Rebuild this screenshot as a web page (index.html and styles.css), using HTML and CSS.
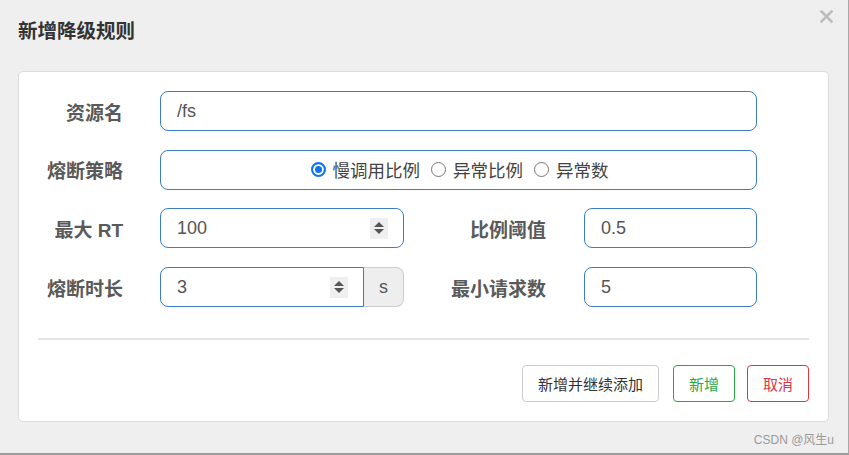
FILE: index.html
```html
<!DOCTYPE html>
<html lang="zh">
<head>
<meta charset="utf-8">
<title>新增降级规则</title>
<link rel="stylesheet" href="styles.css">
</head>
<body>
<div class="modal">
  <header class="modal-head">
    <h4 class="title">新增降级规则</h4>
    <span class="close" aria-label="关闭">
      <svg width="13" height="13" viewBox="0 0 13 13"><path d="M1.5 1.5 L11.5 11.5 M11.5 1.5 L1.5 11.5" stroke="#bdbdbd" stroke-width="2.6" stroke-linecap="square" fill="none"/></svg>
    </span>
  </header>
  <section class="panel">
    <div class="form">
      <div class="row">
        <label class="label">资源名</label>
        <div class="field wide">/fs</div>
      </div>
      <div class="row">
        <label class="label">熔断策略</label>
        <div class="field wide radios">
          <span class="radio"><span class="dot checked"></span>慢调用比例</span>
          <span class="radio"><span class="dot"></span>异常比例</span>
          <span class="radio"><span class="dot"></span>异常数</span>
        </div>
      </div>
      <div class="row">
        <label class="label">最大 RT</label>
        <div class="field num">100<span class="spin"><i class="up"></i><i class="down"></i></span></div>
        <label class="label label2">比例阈值</label>
        <div class="field small">0.5</div>
      </div>
      <div class="row">
        <label class="label">熔断时长</label>
        <div class="group">
          <div class="field num joined">3<span class="spin"><i class="up"></i><i class="down"></i></span></div>
          <span class="addon">s</span>
        </div>
        <label class="label label2">最小请求数</label>
        <div class="field small">5</div>
      </div>
    </div>
    <div class="divider"></div>
    <div class="actions">
      <button class="btn btn-default">新增并继续添加</button>
      <button class="btn btn-ok">新增</button>
      <button class="btn btn-cancel">取消</button>
    </div>
  </section>
  <div class="watermark">CSDN @风生u</div>
</div>
</body>
</html>
```

FILE: styles.css
```css
* { box-sizing: border-box; }
html, body { margin: 0; padding: 0; }
body {
  background: #efefef;
  font-family: "Liberation Sans", "Noto Sans CJK SC", sans-serif;
  color: #555;
}
.modal {
  width: 849px;
  height: 455px;
  border-right: 1px solid #a8a8a8;
  border-bottom: 2px solid #9a9a9a;
  display: flex;
  flex-direction: column;
}
.modal-head {
  height: 71px;
  display: flex;
  justify-content: space-between;
  align-items: flex-start;
  padding: 0 15px 0 18px;
}
.title {
  margin: 19px 0 0;
  font-size: 19.5px;
  line-height: 24px;
  font-weight: bold;
  color: #333;
}
.close {
  margin-top: 10px;
  width: 13px;
  height: 13px;
  display: block;
}
.close svg { display: block; }
.panel {
  margin: 0 19px 0 18px;
  background: #fff;
  border: 1px solid #dcdcdc;
  border-radius: 5px;
  padding: 19px 19px 19px 19px;
}
.form { display: flex; flex-direction: column; gap: 18.7px; }
.row {
  display: flex;
  align-items: center;
  height: 40px;
}
.label {
  width: 85px;
  margin-right: 37px;
  text-align: right;
  font-size: 19px;
  font-weight: bold;
  color: #5a5a5a;
  white-space: nowrap;
}
.label2 { width: 142px; margin-right: 38px; }
.field {
  height: 40px;
  border: 1px solid #3b7dc0;
  border-radius: 8px;
  display: flex;
  align-items: center;
  padding: 0 15px 0 16px;
  font-size: 18px;
  color: #555;
  background: #fff;
}
.wide { width: 597px; }
.small { width: 173px; }
.num { width: 244px; justify-content: space-between; }
.group { display: flex; width: 244px; }
.joined { width: 204px; border-radius: 8px 0 0 8px; }
.addon {
  width: 40px;
  height: 40px;
  display: flex;
  align-items: center;
  justify-content: center;
  background: #eee;
  border: 1px solid #ccc;
  border-left: 0;
  border-radius: 0 8px 8px 0;
  font-size: 18px;
  color: #555;
}
.spin {
  width: 18px;
  height: 21px;
  background: #efefef;
  display: flex;
  flex-direction: column;
  align-items: center;
  justify-content: center;
  gap: 2px;
}
.spin i {
  display: block;
  width: 0;
  height: 0;
  border-left: 5px solid transparent;
  border-right: 5px solid transparent;
}
.spin .up { border-bottom: 5px solid #555; }
.spin .down { border-top: 5px solid #555; }
.radios {
  justify-content: center;
  gap: 11px;
  font-size: 17.5px;
  color: #444;
  padding-left: 17px;
}
.radio { display: flex; align-items: center; gap: 7px; }
.dot {
  width: 15px;
  height: 15px;
  border-radius: 50%;
  border: 1px solid #767676;
  background: #fff;
  display: inline-block;
}
.dot.checked {
  border: 2px solid #0b75f5;
  box-shadow: inset 0 0 0 2px #fff;
  background: #0b75f5;
}
.divider {
  height: 2px;
  background: #e5e5e5;
  margin: 31px 0 25px;
}
.actions {
  display: flex;
  justify-content: flex-end;
  gap: 13px;
}
.btn {
  height: 37px;
  padding: 0 15px;
  border-radius: 4px;
  background: #fff;
  font-family: "Liberation Sans", "Noto Sans CJK SC", sans-serif;
  font-size: 15px;
  cursor: pointer;
}
.btn-default { border: 1px solid #ccc; color: #333; width: 137px; }
.btn-ok { border: 1px solid #28a745; color: #28a745; width: 62px; margin-left: 1px; }
.btn-cancel { border: 1px solid #dc3545; color: #dc3545; width: 62px; margin-left: -1px; }
.watermark {
  text-align: right;
  padding: 11px 14px 0 0;
  font-size: 12px;
  line-height: 15px;
  color: #9a9a9a;
}
```
